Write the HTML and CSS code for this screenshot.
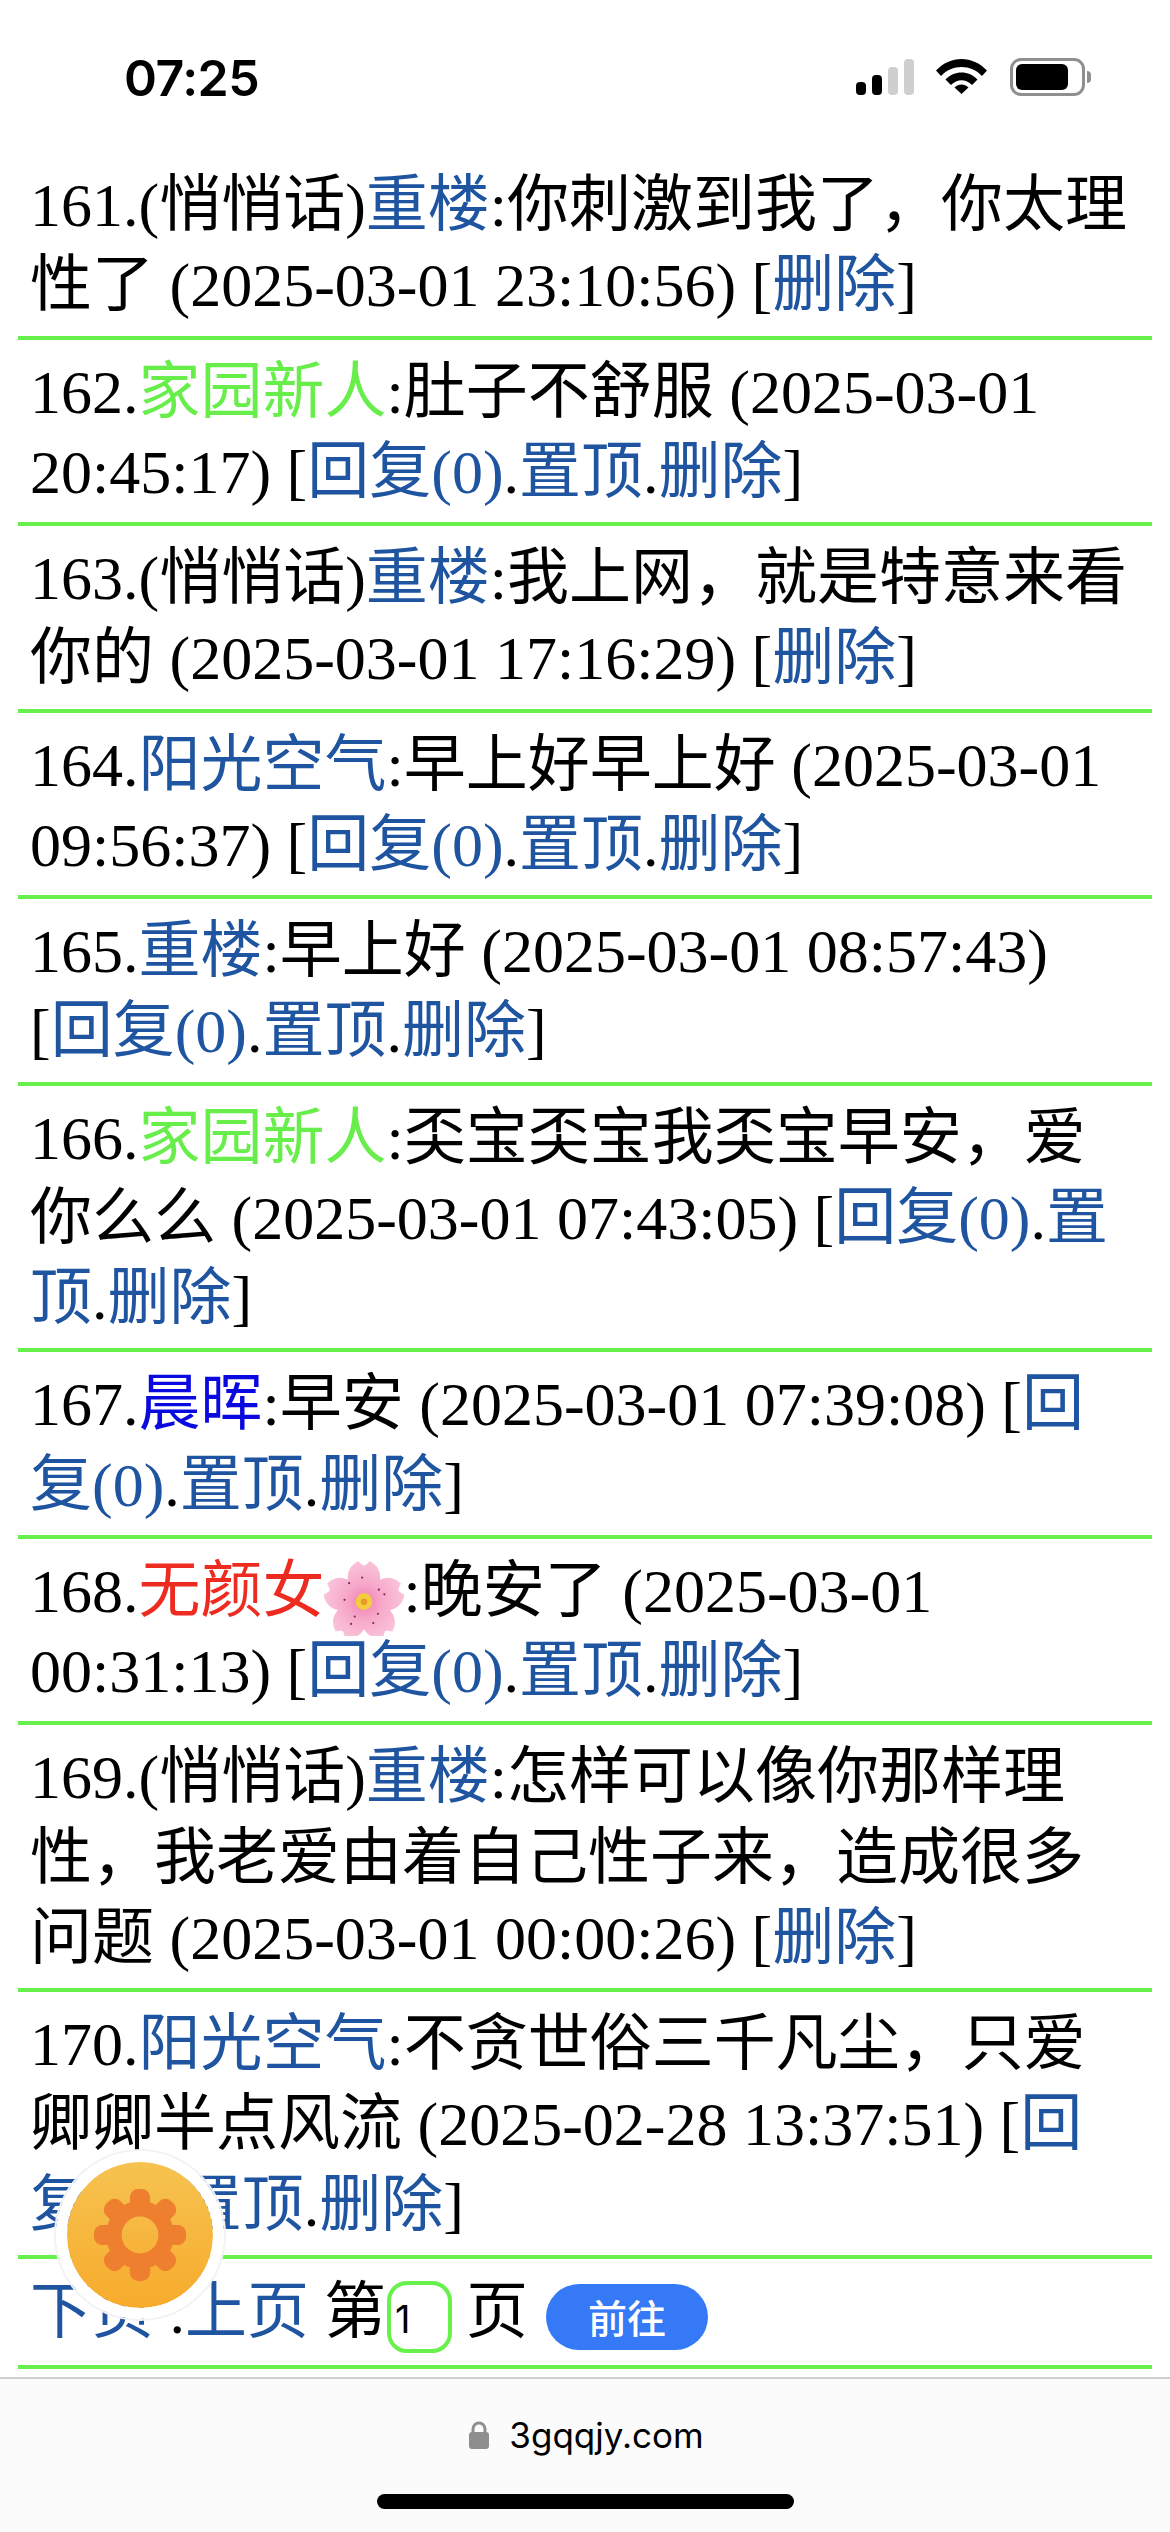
FILE: index.html
```html
<!DOCTYPE html>
<html lang="zh">
<head>
<meta charset="utf-8">
<title>3gqqjy.com</title>
<link rel="stylesheet" href="styles.css">
</head>
<body>
<div class="screen">
  <header class="status">
    <span class="time">07:25</span>
    <div class="status-icons">
      <div class="signal">
        <i class="bar b1"></i><i class="bar b2"></i><i class="bar b3 dim"></i><i class="bar b4 dim"></i>
      </div>
      <svg class="wifi" viewBox="0 0 51 36"><path d="M0 12.5C14-3 37-3 51 12.5L46 18C35 6 16 6 5 18Z"/><path d="M9.5 21.5C18 12 33 12 41.500 21.500L36 27C30 20.500 21 20.500 15 27Z"/><path d="M18.500 29.500C22.500 25.500 28.500 25.500 32.500 29.500L25.500 36Z"/></svg>
      <div class="battery"><div class="battery-body"><div class="battery-fill"></div></div><i class="battery-nub"></i></div>
    </div>
  </header>

  <main class="list">
    <div class="row">161.(悄悄话)<a>重楼</a>:你刺激到我了，你太理性了 (2025-03-01 23:10:56) [<a>删除</a>]</div>
    <div class="row">162.<span class="green">家园新人</span>:肚子不舒服 (2025-03-01 20:45:17) [<a>回复(0)</a>.<a>置顶</a>.<a>删除</a>]</div>
    <div class="row">163.(悄悄话)<a>重楼</a>:我上网，就是特意来看你的 (2025-03-01 17:16:29) [<a>删除</a>]</div>
    <div class="row">164.<a>阳光空气</a>:早上好早上好 (2025-03-01 09:56:37) [<a>回复(0)</a>.<a>置顶</a>.<a>删除</a>]</div>
    <div class="row">165.<a>重楼</a>:早上好 (2025-03-01 08:57:43) [<a>回复(0)</a>.<a>置顶</a>.<a>删除</a>]</div>
    <div class="row">166.<span class="green">家园新人</span>:奀宝奀宝我奀宝早安，爱你么么 (2025-03-01 07:43:05) [<a>回复(0)</a>.<a>置顶</a>.<a>删除</a>]</div>
    <div class="row">167.<span class="blue">晨晖</span>:早安 (2025-03-01 07:39:08) [<a>回复(0)</a>.<a>置顶</a>.<a>删除</a>]</div>
    <div class="row">168.<span class="red">无颜女</span><svg class="blossom" viewBox="-3 0 86 82"><defs><radialGradient id="petal" gradientUnits="userSpaceOnUse" cx="40" cy="45" r="44"><stop offset="0" stop-color="#f07fb0"/><stop offset=".45" stop-color="#f7a8ca"/><stop offset="1" stop-color="#fac4da"/></radialGradient></defs><g fill="url(#petal)"><path d="M40 45C20 32 16 10 34 1c2 3 4 4 6 5 2-1 4-2 6-5 18 9 14 31-6 44Z"/><path d="M40 45C20 32 16 10 34 1c2 3 4 4 6 5 2-1 4-2 6-5 18 9 14 31-6 44Z" transform="rotate(72 40 45)"/><path d="M40 45C20 32 16 10 34 1c2 3 4 4 6 5 2-1 4-2 6-5 18 9 14 31-6 44Z" transform="rotate(144 40 45)"/><path d="M40 45C20 32 16 10 34 1c2 3 4 4 6 5 2-1 4-2 6-5 18 9 14 31-6 44Z" transform="rotate(216 40 45)"/><path d="M40 45C20 32 16 10 34 1c2 3 4 4 6 5 2-1 4-2 6-5 18 9 14 31-6 44Z" transform="rotate(288 40 45)"/></g><circle cx="40" cy="45" r="9" fill="#f3cd3e"/><circle cx="40" cy="45" r="3.500" fill="#e79a28"/><g fill="#7c2f52"><circle cx="38" cy="19" r="1.200"/><circle cx="56" cy="32" r="1.200"/><circle cx="62" cy="37" r="1.200"/><circle cx="55" cy="58" r="1.200"/><circle cx="50" cy="68" r="1.200"/><circle cx="30" cy="61" r="1.200"/><circle cx="26" cy="69" r="1.200"/><circle cx="19" cy="43" r="1.200"/><circle cx="24" cy="25" r="1.200"/></g></svg>:晚安了 (2025-03-01 00:31:13) [<a>回复(0)</a>.<a>置顶</a>.<a>删除</a>]</div>
    <div class="row">169.(悄悄话)<a>重楼</a>:怎样可以像你那样理性，我老爱由着自己性子来，造成很多问题 (2025-03-01 00:00:26) [<a>删除</a>]</div>
    <div class="row">170.<a>阳光空气</a>:不贪世俗三千凡尘，只爱卿卿半点风流 (2025-02-28 13:37:51) [<a>回复(0)</a>.<a>置顶</a>.<a>删除</a>]</div>
    <div class="row pager">
      <a>下页</a> .<a>上页</a> <span class="pager-label">第</span><span class="page-input">1</span><span class="pager-label after">页</span><span class="go">前往</span>
    </div>
  </main>

  <footer class="chrome">
    <div class="address">
      <svg class="lock" viewBox="0 0 20 28"><path d="M4 12V8a6 6 0 0 1 12 0v4" fill="none" stroke="#8e8e8e" stroke-width="3"/><rect x="0" y="11" width="20" height="17" rx="3" fill="#8e8e8e"/></svg>
      <span>3gqqjy.com</span>
    </div>
    <div class="home-bar"></div>
  </footer>

  <div class="fab">
    <svg class="gear" viewBox="0 0 100 100">
      <defs><linearGradient id="hole" x1="0" y1="0" x2="0" y2="1"><stop offset="0" stop-color="#f6bb45"/><stop offset="1" stop-color="#f7b238"/></linearGradient></defs>
      <g fill="#ee7f2e">
        <circle cx="50" cy="50" r="37"/>
        <rect x="39" y="0" width="22" height="100" rx="9"/>
        <rect x="39" y="0" width="22" height="100" rx="9" transform="rotate(45 50 50)"/>
        <rect x="39" y="0" width="22" height="100" rx="9" transform="rotate(90 50 50)"/>
        <rect x="39" y="0" width="22" height="100" rx="9" transform="rotate(135 50 50)"/>
      </g>
      <circle cx="50" cy="50" r="20" fill="url(#hole)"/>
    </svg>
  </div>
</div>
</body>
</html>
```
FILE: styles.css
```css
* { box-sizing: border-box; }
html, body { margin: 0; padding: 0; background: #fff; }
.screen {
  position: relative;
  width: 1170px;
  height: 2532px;
  overflow: hidden;
  display: flex;
  flex-direction: column;
  background: #fff;
  font-family: "Liberation Serif", "Noto Sans CJK SC", serif;
  color: #000;
}

/* status bar */
.status {
  height: 153px;
  flex: none;
  display: flex;
  justify-content: space-between;
  align-items: flex-start;
  padding: 52px 79px 0 124px;
}
.time {
  font: 600 50px/52px Inter, "Liberation Sans", sans-serif;
  letter-spacing: -0.5px;
}
.status-icons { display: flex; align-items: flex-start; padding-top: 6px; }
.signal { display: flex; align-items: flex-end; gap: 6px; height: 37px; }
.bar { display: block; width: 10px; border-radius: 4px; background: #000; }
.bar.dim { background: #cfcfcf; }
.b1 { height: 13px; }
.b2 { height: 20px; }
.b3 { height: 28px; }
.b4 { height: 36px; }
.wifi { width: 51px; height: 36px; margin-left: 22px; fill: #000; }
.battery { display: flex; align-items: center; margin-left: 23px; height: 38px; }
.battery-body {
  width: 75px;
  height: 38px;
  border: 3px solid #8f8f8f;
  border-radius: 11px;
  padding: 3px 14px 3px 3px;
}
.battery-fill { width: 100%; height: 100%; background: #000; border-radius: 6px; }
.battery-nub { width: 4px; height: 12px; margin-left: 2px; background: #8f8f8f; border-radius: 0 4px 4px 0; }

/* list */
.list { flex: none; margin: 0 18px; }
.row {
  font-size: 62px;
  line-height: 80.25px;
  padding: 12px 17px 10px 12px;
  border-bottom: 4px solid #68f04c;
}
.row a { color: #1f55a0; text-decoration: none; }
.green { color: #68ee4a; }
.blue { color: #0a0ae0; }
.red { color: #ee2b20; }
.blossom { width: 80px; height: 76px; vertical-align: -14px; margin: -10px 0 -10px -1px; }

/* pager */
.pager { display: flex; align-items: center; white-space: pre; height: 110px; padding: 0 0 0 12px; }
.pager-label { margin-left: 15px; }
.pager-label.after { margin-left: 14px; }
.page-input {
  width: 65px;
  height: 72px;
  margin: 11px 0 0 1px;
  border: 4px solid #68f04c;
  border-radius: 20px;
  padding: 9px 0 0 4px;
  font: 400 38px/50px Inter, "Liberation Sans", sans-serif;
}
.go {
  width: 162px;
  height: 66px;
  margin: 11px 0 0 18px;
  border-radius: 33px;
  background: #3579f6;
  color: #fff;
  text-align: center;
  font: 500 39px/64px "Noto Sans CJK SC", sans-serif;
}

/* browser chrome */
.chrome {
  flex: 1;
  margin-top: 8px;
  background: #fbfbfb;
  border-top: 2px solid #cfcfcf;
  display: flex;
  flex-direction: column;
  align-items: center;
}
.address {
  display: flex;
  align-items: center;
  gap: 20px;
  margin: 31px 0 0 3px;
  height: 50px;
  font: 400 35px/50px Inter, "Liberation Sans", sans-serif;
  color: #000;
}
.lock { width: 20px; height: 28px; }
.home-bar {
  width: 417px;
  height: 15px;
  margin-top: 34px;
  border-radius: 8px;
  background: #000;
}

/* floating action button */
.fab {
  position: absolute;
  left: 56px;
  top: 2151px;
  width: 168px;
  height: 168px;
  border-radius: 50%;
  background: linear-gradient(#f6c350, #f7ab2c) padding-box;
  border: 11px solid #fff;
  box-shadow: 0 0 0 2px #f2f2f4;
  display: flex;
  align-items: center;
  justify-content: center;
}
.gear { width: 92px; height: 92px; }
```
